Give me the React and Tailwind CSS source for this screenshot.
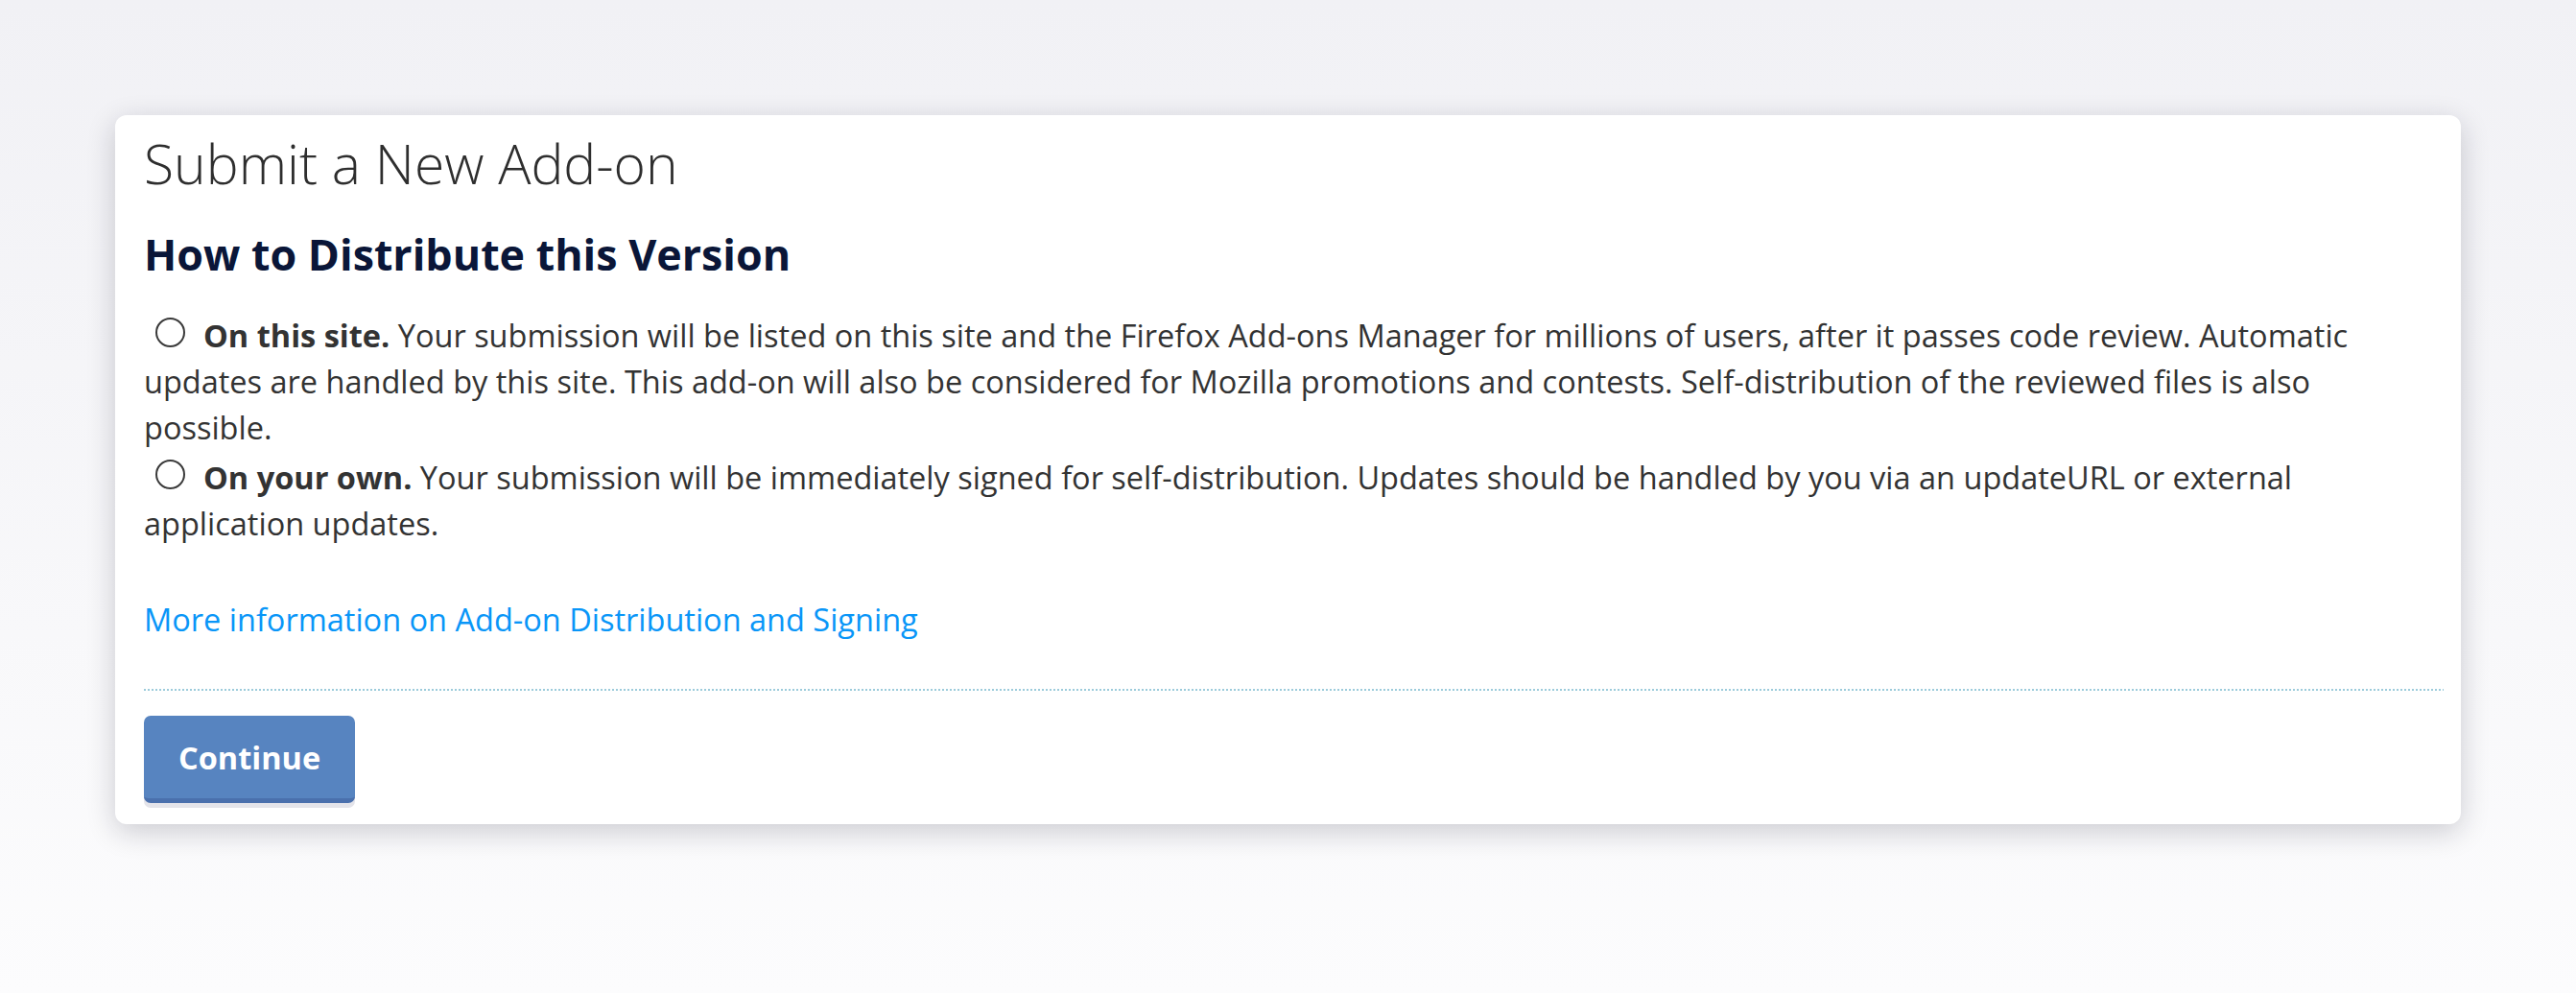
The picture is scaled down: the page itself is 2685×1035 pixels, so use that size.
export default function App() {
    return (
        <div className="min-h-screen w-full bg-gradient-to-b from-[#f1f1f5] to-[#fcfcfd] p-[120px] pb-[176px] font-['Open_Sans',sans-serif]">
            <div className="bg-white rounded-[12px] shadow-[0_8px_30px_rgba(20,20,40,0.2)] pt-[16px] pl-[30px] pr-[18px] pb-[22px] text-[#333]">

                {/* TITLE */}
                <h1 className="text-[57px] leading-[69px] font-light text-[#2e2e2e]">Submit a New Add-on</h1>
                <h2 className="mt-[32.5px] text-[44.8px] leading-[54px] font-bold text-[#0a1638]">How to Distribute this Version</h2>

                {/* OPTIONS */}
                <div className="mt-[34px] text-[32.5px] leading-[48.3px]">
                    <label className="block cursor-pointer">
                        <span className="inline-block w-[31px] h-[31px] rounded-full border-2 border-[#3a3a3a] bg-white align-baseline ml-[12px] mr-[19px]" />
                        <strong className="font-bold">On this site.</strong> Your submission will be listed on this site and the Firefox Add-ons Manager for millions of users, after it passes code review. Automatic updates are handled by this site. This add-on will also be considered for Mozilla promotions and contests. Self-distribution of the reviewed files is also possible.
                    </label>
                    <label className="block cursor-pointer mt-[3.4px]">
                        <span className="inline-block w-[31px] h-[31px] rounded-full border-2 border-[#3a3a3a] bg-white align-baseline ml-[12px] mr-[19px]" />
                        <strong className="font-bold">On your own.</strong> Your submission will be immediately signed for self-distribution. Updates should be handled by you via an updateURL or external application updates.
                    </label>
                </div>

                {/* LINK */}
                <p className="mt-[52px] text-[32.5px] leading-[48.3px]">
                    <a href="#" className="text-[#0996f8]">More information on Add-on Distribution and Signing</a>
                </p>

                {/* FOOTER */}
                <div className="mt-[47px] h-[2px] bg-[linear-gradient(to_right,#9ccbdb_50%,transparent_50%)] bg-[length:4px_2px]" />
                <button className="mt-[26px] block rounded-[7px] bg-[#5784c0] border-b-[5px] border-[#4a70ad] px-[36px] pt-[20px] pb-[18px] text-[32.5px] leading-[48px] font-bold text-white shadow-[0_5px_0_#e4e4ea]">
                    Continue
                </button>
            </div>
        </div>
    );
}
